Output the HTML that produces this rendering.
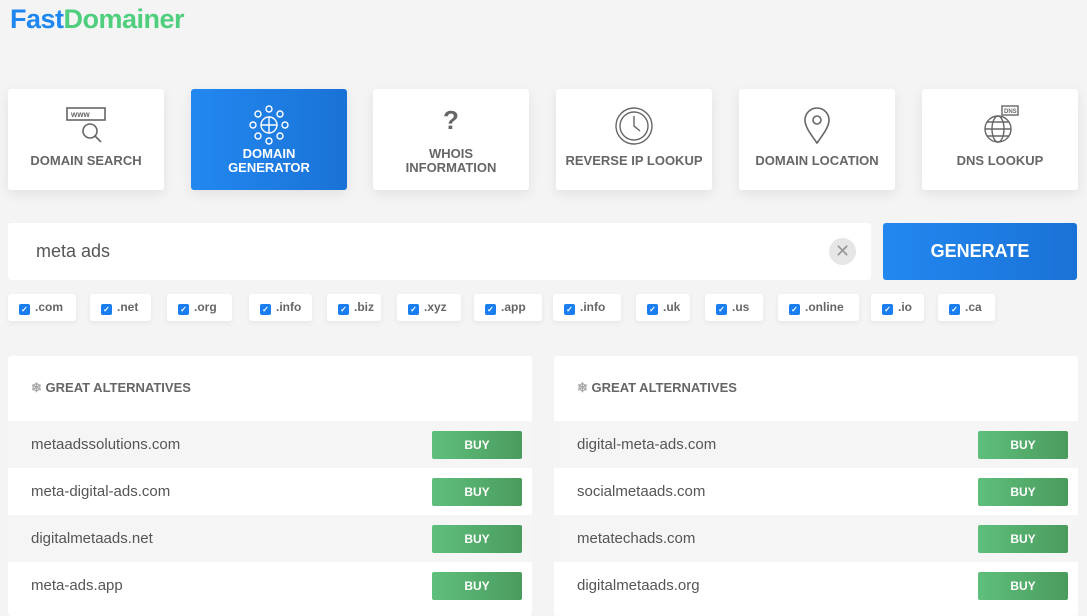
<!DOCTYPE html><html><head><style>
*{box-sizing:border-box;margin:0;padding:0}
body{width:1087px;height:614px;overflow:hidden;background:#f4f4f4;font-family:"Liberation Sans",sans-serif;position:relative}
.logo{position:absolute;left:10px;top:4px;font-size:27px;font-weight:900;letter-spacing:-0.5px}
.card{position:absolute;top:89px;width:156px;height:101px;background:#fff;border-radius:3px;box-shadow:0 4px 12px rgba(0,0,0,.08);text-align:center;color:#666;font-weight:bold;font-size:13px}
.card svg{position:absolute;left:58px;top:16px}
.card .t{position:absolute;left:0;right:0;top:64px}
.card .t2{position:absolute;left:0;right:0;top:58px;line-height:14px}
.act{background:linear-gradient(90deg,#2288f0,#1a72d6);color:#fff}
.search{position:absolute;left:8px;top:223px;width:863px;height:57px;background:#fff;border-radius:3px;font-size:18px;color:#555;padding:18px 28px}
.x{position:absolute;right:15px;top:15px;width:27px;height:27px;border-radius:50%;background:#e6e6e6;color:#999;font-size:18px;text-align:center;line-height:27px}
.gen{position:absolute;left:883px;top:223px;width:194px;height:57px;background:linear-gradient(90deg,#2288f0,#1a72d6);border-radius:3px;color:#fff;font-weight:bold;font-size:18px;text-align:center;line-height:57px}
.chip{position:absolute;top:294px;height:27px;background:#fff;border-radius:3px;box-shadow:0 2px 6px rgba(0,0,0,.06);font-size:12px;font-weight:bold;color:#666;padding:6px 0 0 11px}
.chip i{display:inline-block;width:11px;height:11px;background:#1a7ef0;border-radius:2px;vertical-align:-1px;margin-right:5px;color:#fff;font-size:8px;font-style:normal;text-align:center;line-height:11px}
.panel{position:absolute;top:356px;width:524px;height:260px;background:#fff;border-radius:3px}
.ph{height:65px;padding:24px 0 0 23px;font-size:13px;font-weight:bold;color:#666}
.row{height:47px;font-size:15px;color:#555;padding:15px 0 0 23px;position:relative}
.row:nth-child(even){background:#f5f5f5}
.buy{position:absolute;left:424px;top:10px;width:90px;height:28px;background:linear-gradient(90deg,#5fbf7c,#4a9b5c);border-radius:2px;color:#fff;font-size:12px;font-weight:bold;text-align:center;line-height:28px}
</style></head><body>
<div class="logo"><span style="color:#1e87f0">Fast</span><span style="color:#4fcf7d">Domainer</span></div>

<div class="card" style="left:8px"><svg width="40" height="40" viewBox="0 0 40 40" fill="none" stroke="#666" stroke-width="1.6"><rect x="1" y="3" width="38" height="12"/><text x="5" y="12" font-size="8" fill="#666" stroke="none">www</text><circle cx="24" cy="26" r="7"/><path d="M29 31l6 6"/></svg><div class="t">DOMAIN SEARCH</div></div>
<div class="card act" style="left:191px"><svg width="40" height="40" viewBox="0 0 40 40" fill="none" stroke="#fff" stroke-width="1.4"><circle cx="20" cy="20" r="8"/><path d="M12 20h16M20 12v16"/><circle cx="20" cy="4" r="3"/><circle cx="20" cy="36" r="3"/><circle cx="4" cy="20" r="3"/><circle cx="36" cy="20" r="3"/><circle cx="9" cy="9" r="3"/><circle cx="31" cy="9" r="3"/><circle cx="9" cy="31" r="3"/><circle cx="31" cy="31" r="3"/></svg><div class="t2">DOMAIN<br>GENERATOR</div></div>
<div class="card" style="left:373px"><div style="position:absolute;left:0;right:0;top:16px;font-size:26px;color:#666">?</div><div class="t2">WHOIS<br>INFORMATION</div></div>
<div class="card" style="left:556px"><svg width="40" height="40" viewBox="0 0 40 40" fill="none" stroke="#666" stroke-width="1.4"><circle cx="20" cy="21" r="18"/><circle cx="20" cy="21" r="14"/><path d="M20 11v10l6 5"/></svg><div class="t">REVERSE IP LOOKUP</div></div>
<div class="card" style="left:739px"><svg width="40" height="40" viewBox="0 0 40 40" fill="none" stroke="#666" stroke-width="1.6"><path d="M20 38C12 27 8 21 8 15a12 12 0 0124 0c0 6-4 12-12 23z"/><circle cx="20" cy="15" r="4"/></svg><div class="t">DOMAIN LOCATION</div></div>
<div class="card" style="left:922px"><svg width="40" height="40" viewBox="0 0 40 40" fill="none" stroke="#666" stroke-width="1.4"><circle cx="18" cy="24" r="13"/><ellipse cx="18" cy="24" rx="6" ry="13"/><path d="M5 24h26M7 17h22M7 31h22"/><rect x="22" y="1" width="16" height="9" fill="#fff"/><text x="24" y="8" font-size="6" fill="#666" stroke="none">DNS</text></svg><div class="t">DNS LOOKUP</div></div>

<div class="search">meta ads<div class="x">✕</div></div>
<div class="gen">GENERATE</div>

<div class="chip" style="left:8px;width:68px"><i>✓</i>.com</div>
<div class="chip" style="left:90px;width:61px"><i>✓</i>.net</div>
<div class="chip" style="left:167px;width:65px"><i>✓</i>.org</div>
<div class="chip" style="left:249px;width:63px"><i>✓</i>.info</div>
<div class="chip" style="left:327px;width:54px"><i>✓</i>.biz</div>
<div class="chip" style="left:397px;width:64px"><i>✓</i>.xyz</div>
<div class="chip" style="left:474px;width:68px"><i>✓</i>.app</div>
<div class="chip" style="left:553px;width:68px"><i>✓</i>.info</div>
<div class="chip" style="left:636px;width:54px"><i>✓</i>.uk</div>
<div class="chip" style="left:705px;width:58px"><i>✓</i>.us</div>
<div class="chip" style="left:778px;width:81px"><i>✓</i>.online</div>
<div class="chip" style="left:871px;width:53px"><i>✓</i>.io</div>
<div class="chip" style="left:938px;width:57px"><i>✓</i>.ca</div>

<div class="panel" style="left:8px"><div class="ph"><span style="color:#aaa">❄</span> GREAT ALTERNATIVES</div>
<div class="row">metaadssolutions.com<div class="buy">BUY</div></div>
<div class="row">meta-digital-ads.com<div class="buy">BUY</div></div>
<div class="row">digitalmetaads.net<div class="buy">BUY</div></div>
<div class="row">meta-ads.app<div class="buy">BUY</div></div></div>
<div class="panel" style="left:554px"><div class="ph"><span style="color:#aaa">❄</span> GREAT ALTERNATIVES</div>
<div class="row">digital-meta-ads.com<div class="buy">BUY</div></div>
<div class="row">socialmetaads.com<div class="buy">BUY</div></div>
<div class="row">metatechads.com<div class="buy">BUY</div></div>
<div class="row">digitalmetaads.org<div class="buy">BUY</div></div></div>
</body></html>
